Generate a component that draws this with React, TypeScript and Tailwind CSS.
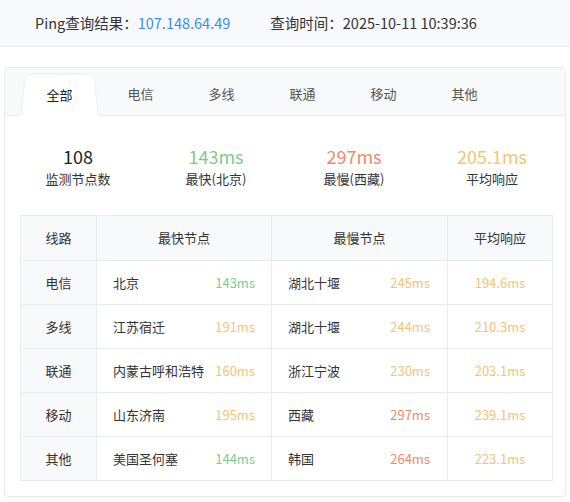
import React from "react";

const tabs = ["全部", "电信", "多线", "联通", "移动", "其他"];

type Row = { line: string; fast: string; fastMs: string; fastC: string; slow: string; slowMs: string; slowC: string; avg: string };

const G = "text-[#7dcb8c]";
const Y = "text-[#f5c374]";
const R = "text-[#ee8a6c]";

const rows: Row[] = [
  { line: "电信", fast: "北京", fastMs: "143ms", fastC: G, slow: "湖北十堰", slowMs: "245ms", slowC: Y, avg: "194.6ms" },
  { line: "多线", fast: "江苏宿迁", fastMs: "191ms", fastC: Y, slow: "湖北十堰", slowMs: "244ms", slowC: Y, avg: "210.3ms" },
  { line: "联通", fast: "内蒙古呼和浩特", fastMs: "160ms", fastC: Y, slow: "浙江宁波", slowMs: "230ms", slowC: Y, avg: "203.1ms" },
  { line: "移动", fast: "山东济南", fastMs: "195ms", fastC: Y, slow: "西藏", slowMs: "297ms", slowC: R, avg: "239.1ms" },
  { line: "其他", fast: "美国圣何塞", fastMs: "144ms", fastC: G, slow: "韩国", slowMs: "264ms", slowC: R, avg: "223.1ms" },
];

function TabShape() {
  return (
    <svg className="absolute left-0 bottom-0" width="81" height="43" viewBox="0 0 81 43">
      <path d="M1.5 43 L5.5 9 Q6.5 1 14 1 L67 1 Q74.5 1 75.5 9 L79.5 43 Z" fill="#ffffff" stroke="#eceef1" strokeWidth="1" />
      <rect x="1" y="42" width="79" height="1" fill="#ffffff" />
    </svg>
  );
}

export default function App() {
  return (
    <div
      className="w-[570px] h-[502px] bg-white text-[#333] overflow-hidden"
      style={{ fontFamily: '"Noto Sans CJK SC", "Noto Sans", sans-serif' }}
    >
      <div className="h-[47px] bg-[#f7f9fc] border-b border-[#e8ebef] flex items-center pl-[35px] text-[14.5px]">
        <span>Ping查询结果：</span>
        <span className="text-[#3a8ee6]">107.148.64.49</span>
        <span className="ml-[40px]">查询时间：</span>
        <span>2025-10-11 10:39:36</span>
      </div>
      <div className="mx-[4px] mt-[20px] h-[430px] border border-[#e9ebee] rounded-[4px] overflow-hidden">
        <div className="h-[48px] bg-[#f7f9fb] border-b border-[#eceef1] flex items-end pl-[14px]">
          {tabs.map((t, i) => (
            <div
              key={t}
              className={
                "relative w-[81px] h-[42px] flex items-center justify-center text-[13px] " +
                (i === 0 ? "text-[#222] -mb-px h-[43px]" : "text-[#555]")
              }
            >
              {i === 0 && <TabShape />}
              <span className="relative">{t}</span>
            </div>
          ))}
        </div>
        <div className="flex px-[4px] pt-[28px] h-[99px]">
          {[
            { v: "108", c: "text-[#222]", l: "监测节点数" },
            { v: "143ms", c: G, l: "最快(北京)" },
            { v: "297ms", c: R, l: "最慢(西藏)" },
            { v: "205.1ms", c: Y, l: "平均响应" },
          ].map((s) => (
            <div key={s.l} className="flex-1 flex flex-col items-center">
              <div className={"text-[18px] leading-[24px] " + s.c}>{s.v}</div>
              <div className="text-[13px] leading-[18px] mt-[2px] text-[#333]">{s.l}</div>
            </div>
          ))}
        </div>
        <div className="mx-[15px]">
          <table className="w-[532px] border-collapse text-[13px] table-fixed">
            <colgroup>
              <col className="w-[76px]" />
              <col className="w-[175px]" />
              <col className="w-[176px]" />
              <col className="w-[105px]" />
            </colgroup>
            <thead>
              <tr className="h-[45px] bg-[#f7f9fb]">
                {["线路", "最快节点", "最慢节点", "平均响应"].map((h) => (
                  <th key={h} className="border border-[#e8ebef] font-normal text-center text-[#333]">{h}</th>
                ))}
              </tr>
            </thead>
            <tbody>
              {rows.map((r) => (
                <tr key={r.line} className="h-[44px]">
                  <td className="border border-[#e8ebef] bg-[#f7f9fb] text-center">{r.line}</td>
                  <td className="border border-[#e8ebef] pl-[16px] pr-[16px]">
                    <div className="flex justify-between">
                      <span>{r.fast}</span>
                      <span className={r.fastC}>{r.fastMs}</span>
                    </div>
                  </td>
                  <td className="border border-[#e8ebef] pl-[16px] pr-[17px]">
                    <div className="flex justify-between">
                      <span>{r.slow}</span>
                      <span className={r.slowC}>{r.slowMs}</span>
                    </div>
                  </td>
                  <td className={"border border-[#e8ebef] text-center " + Y}>{r.avg}</td>
                </tr>
              ))}
            </tbody>
          </table>
        </div>
      </div>
    </div>
  );
}
